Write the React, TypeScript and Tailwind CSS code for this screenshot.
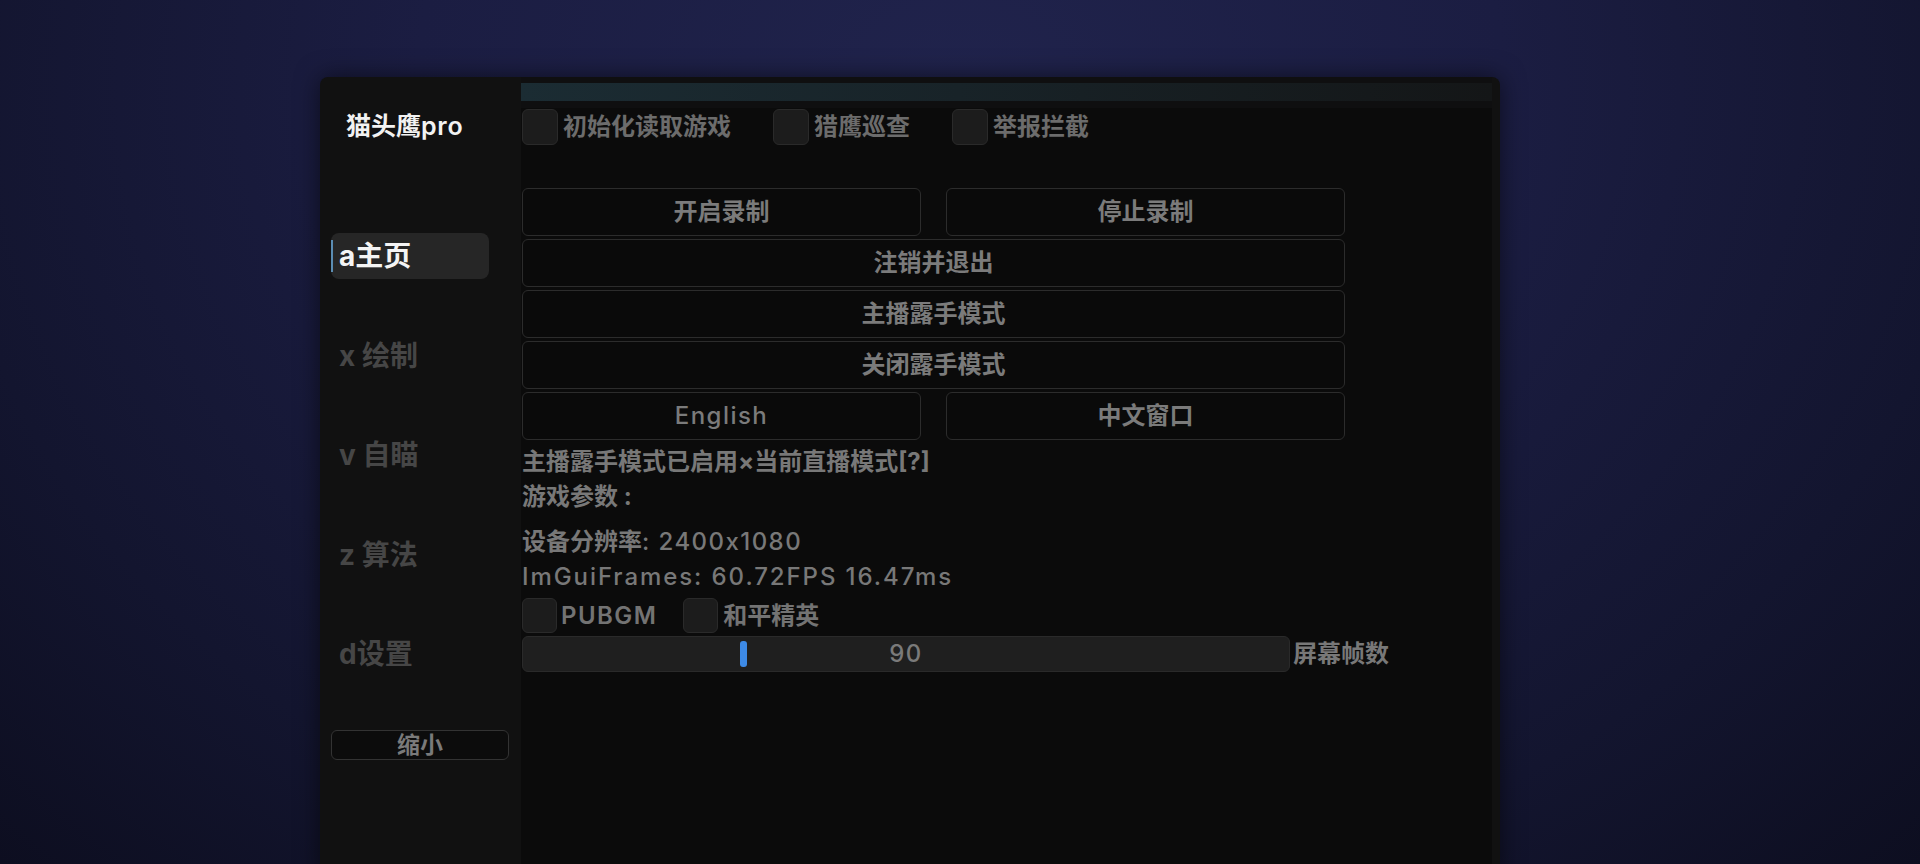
import React from "react";

const FONT = "font-['Inter','Noto_Sans_CJK_SC',sans-serif]";
const LAT = "font-medium tracking-[0.06em]";

const NAV = [
  { key: "a", label: "主页", active: true },
  { key: "x", label: " 绘制" },
  { key: "v", label: " 自瞄" },
  { key: "z", label: " 算法" },
  { key: "d", label: "设置" },
];

function Check({ label, first }: { label: string; first?: boolean }) {
  return (
    <div className={`flex items-center ${first ? "" : "ml-[42px]"}`}>
      <div className="h-[36px] w-[36px] rounded-[6px] border border-[#2a2a2a] bg-[#1c1c1c]" />
      <span className="ml-[5px] text-[24px] leading-[36px] font-bold text-[#6c6c6c]">{label}</span>
    </div>
  );
}

function Btn({ children, span, latin }: { children: React.ReactNode; span?: boolean; latin?: boolean }) {
  return (
    <button
      className={`flex h-[48px] items-center justify-center rounded-[6px] border border-[#2c2c2c] bg-[#0a0a0a] text-[24px] text-[#7b7b7b] ${
        latin ? LAT : "font-bold"
      } ${span ? "col-span-2" : ""}`}
    >
      {children}
    </button>
  );
}

export default function App() {
  return (
    <div
      className={`h-[864px] w-full overflow-hidden bg-[radial-gradient(ellipse_at_50%_10%,#20234c_0%,#1b1d42_40%,#13152f_75%,#0d0e20_100%)] pl-[320px] pt-[77px] ${FONT}`}
    >
      <div className="flex h-[800px] w-[1180px] rounded-t-[8px] bg-[#111111] shadow-[0_0_24px_rgba(0,0,0,0.55)]">
        {/* Sidebar */}
        <div className="flex w-[201px] flex-col px-[11px]">
          <div className="mt-[33px] pl-[15px] text-[25px] leading-[32px] font-semibold text-[#f2f2f2]">
            猫头鹰<span className="tracking-[0.03em]">pro</span>
          </div>
          <div className="mt-[91px] flex flex-col gap-[53.5px]">
            {NAV.map((n) =>
              n.active ? (
                <div key={n.key} className="relative flex h-[46px] w-[158px] items-center rounded-[8px] bg-[#262626] pl-[8px]">
                  <div className="absolute left-0 top-[7px] h-[32px] w-[2px] bg-[#5b8db3]" />
                  <span className="text-[28px] font-bold text-[#f4f4f4]">
                    {n.key}
                    {n.label}
                  </span>
                </div>
              ) : (
                <div key={n.key} className="flex h-[46px] items-center pl-[8px] text-[28px] font-bold text-[#464646]">
                  {n.key}
                  <span className="whitespace-pre">{n.label}</span>
                </div>
              )
            )}
          </div>
          <button className="mt-[53px] flex h-[30px] w-[178px] items-center justify-center rounded-[6px] border border-[#333] bg-[#0c0c0c] text-[23px] leading-[30px] font-bold text-[#7a7a7a]">
            缩小
          </button>
        </div>

        {/* Content */}
        <div className="flex w-[971px] flex-col bg-[#0b0b0b]">
          <div className="h-[31px] bg-[#0f0f10] pt-[6px]">
            <div className="h-[18px] bg-[linear-gradient(90deg,#1b2c33_0%,#182328_45%,#141617_100%)]" />
          </div>
          <div className="pl-[1px]">
            <div className="flex h-[37px] items-center">
              <Check label="初始化读取游戏" first />
              <Check label="猎鹰巡查" />
              <Check label="举报拦截" />
            </div>

            <div className="mt-[43px] grid w-[823px] grid-cols-2 gap-x-[25px] gap-y-[3px]">
              <Btn>开启录制</Btn>
              <Btn>停止录制</Btn>
              <Btn span>注销并退出</Btn>
              <Btn span>主播露手模式</Btn>
              <Btn span>关闭露手模式</Btn>
              <Btn latin>English</Btn>
              <Btn>中文窗口</Btn>
            </div>

            <div className="mt-[4px] text-[24px] leading-[35px] text-[#787878]">
              <div className="font-bold">主播露手模式已启用×当前直播模式[?]</div>
              <div className="font-bold">游戏参数 :</div>
              <div className="mt-[10px]">
                <span className="font-bold">设备分辨率</span>
                <span className={LAT}>: 2400x1080</span>
              </div>
              <div className="font-medium tracking-[0.08em]">ImGuiFrames: 60.72FPS 16.47ms</div>
            </div>

            <div className="mt-[4px] flex h-[35px] items-center">
              <div className="h-[35px] w-[35px] rounded-[6px] border border-[#2a2a2a] bg-[#1c1c1c]" />
              <span className={`ml-[4px] text-[24px] text-[#737373] ${LAT} font-semibold`}>PUBGM</span>
              <div className="ml-[26px] h-[35px] w-[35px] rounded-[6px] border border-[#2a2a2a] bg-[#1c1c1c]" />
              <span className="ml-[5px] text-[24px] font-bold text-[#737373]">和平精英</span>
            </div>

            <div className="mt-[3px] flex items-center">
              <div className="relative flex h-[36px] w-[768px] items-center justify-center rounded-[6px] border border-[#2a2a2a] bg-[#1f1f1f]">
                <div className="absolute left-[217px] top-[4px] h-[26px] w-[7px] rounded-[3px] bg-[#3d8ae6]" />
                <span className={`text-[24px] text-[#7a7a7a] ${LAT}`}>90</span>
              </div>
              <span className="ml-[3px] text-[24px] font-bold text-[#787878]">屏幕帧数</span>
            </div>
          </div>
        </div>
      </div>
    </div>
  );
}
